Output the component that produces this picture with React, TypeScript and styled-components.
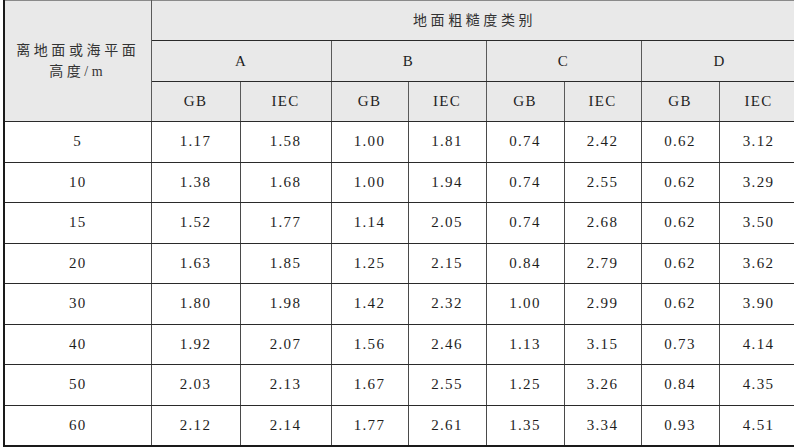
import styled, { createGlobalStyle } from "styled-components"

const GlobalStyle = createGlobalStyle`
  html, body {
    margin: 0;
    padding: 0;
    background: #fff;
    overflow: hidden;
  }
`

const Page = styled.div`
  width: 794px;
  height: 447px;
  overflow: hidden;
  padding-left: 3px;
  box-sizing: border-box;
`

const Grid = styled.table`
  border-collapse: collapse;
  table-layout: fixed;
  width: 794px;
  font-family: "Liberation Serif", "Noto Sans CJK SC", serif;
  font-size: 15px;
  color: #1e1e1e;
  border-left: 2px solid #1a1a1a;
  border-top: 1px solid #8a8a8a;
  border-bottom: 2px solid #1a1a1a;
`

const HeadCell = styled.th<{ $h?: number; $cjk?: boolean }>`
  background: #e9e9e9;
  font-weight: normal;
  height: ${(p) => p.$h ?? 39}px;
  padding: 0;
  text-align: center;
  vertical-align: middle;
  letter-spacing: ${(p) => (p.$cjk ? "3.6px" : "1.3px")};
  font-size: ${(p) => (p.$cjk ? "14px" : "15px")};
  color: ${(p) => (p.$cjk ? "#333" : "#1e1e1e")};
  line-height: 21px;
  border-left: 1px solid #5a5a5a;
  border-right: 1px solid #5a5a5a;
  border-bottom: 1px solid #2a2a2a;
`

const Cell = styled.td`
  height: 39.5px;
  padding: 0;
  text-align: center;
  vertical-align: middle;
  letter-spacing: 1.3px;
  border-left: 1px solid #4a4a4a;
  border-right: 1px solid #4a4a4a;
  border-bottom: 1px solid #2a2a2a;
`

const widths = [147, 89, 91, 77, 78, 78, 77, 78, 79]

const rows: [string, string[]][] = [
  ["5", ["1.17", "1.58", "1.00", "1.81", "0.74", "2.42", "0.62", "3.12"]],
  ["10", ["1.38", "1.68", "1.00", "1.94", "0.74", "2.55", "0.62", "3.29"]],
  ["15", ["1.52", "1.77", "1.14", "2.05", "0.74", "2.68", "0.62", "3.50"]],
  ["20", ["1.63", "1.85", "1.25", "2.15", "0.84", "2.79", "0.62", "3.62"]],
  ["30", ["1.80", "1.98", "1.42", "2.32", "1.00", "2.99", "0.62", "3.90"]],
  ["40", ["1.92", "2.07", "1.56", "2.46", "1.13", "3.15", "0.73", "4.14"]],
  ["50", ["2.03", "2.13", "1.67", "2.55", "1.25", "3.26", "0.84", "4.35"]],
  ["60", ["2.12", "2.14", "1.77", "2.61", "1.35", "3.34", "0.93", "4.51"]],
]

const classes = ["A", "B", "C", "D"]

export default function App() {
  return (
    <Page>
      <GlobalStyle />
      <Grid>
        <colgroup>
          {widths.map((w, i) => (
            <col key={i} style={{ width: w }} />
          ))}
        </colgroup>
        <thead>
          <tr>
            <HeadCell rowSpan={3} $cjk>
              离地面或海平面
              <br />
              高度/m
            </HeadCell>
            <HeadCell colSpan={8} $cjk $h={39}>
              地面粗糙度类别
            </HeadCell>
          </tr>
          <tr>
            {classes.map((c) => (
              <HeadCell key={c} colSpan={2} $h={40}>
                {c}
              </HeadCell>
            ))}
          </tr>
          <tr>
            {classes.map((c) => [
              <HeadCell key={c + "gb"} $h={39}>GB</HeadCell>,
              <HeadCell key={c + "iec"} $h={39}>IEC</HeadCell>,
            ])}
          </tr>
        </thead>
        <tbody>
          {rows.map(([h, vals]) => (
            <tr key={h}>
              <Cell>{h}</Cell>
              {vals.map((v, i) => (
                <Cell key={i}>{v}</Cell>
              ))}
            </tr>
          ))}
        </tbody>
      </Grid>
    </Page>
  )
}
